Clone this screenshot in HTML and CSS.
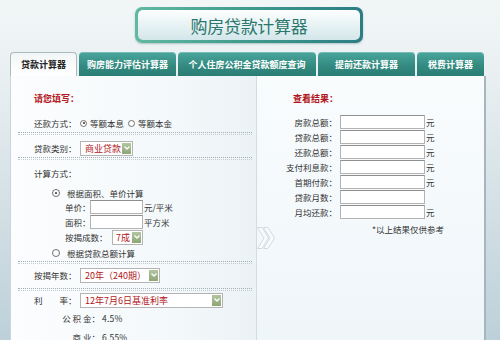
FILE: index.html
```html
<!DOCTYPE html>
<html lang="zh-CN">
<head>
<meta charset="utf-8">
<title>购房贷款计算器</title>
<link rel="stylesheet" href="styles.css">
</head>
<body>
<div class="page">
  <header class="header">
    <div class="title"><div class="title-inner">购房贷款计算器</div></div>
  </header>
  <nav class="tabs">
    <div class="tab active w1">贷款计算器</div>
    <div class="tab w2">购房能力评估计算器</div>
    <div class="tab w3">个人住房公积金贷款额度查询</div>
    <div class="tab w4">提前还款计算器</div>
    <div class="tab w5">税费计算器</div>
  </nav>
  <main class="panel">
    <section class="left">
      <div class="heading">请您填写：</div>
      <div class="row h16 mt9">
        <span class="label">还款方式：</span>
        <span class="radio checked"></span><span class="opt">等额本息</span>
        <span class="radio r2"></span><span class="opt">等额本金</span>
      </div>
      <div class="sep mt1"></div>
      <div class="row h16 mt5">
        <span class="label">贷款类别：</span>
        <div class="select s-type"><span class="sel-text">商业贷款</span><span class="sel-btn"><svg width="6" height="4" viewBox="0 0 6 4"><path d="M0.5 0.5 L3 3 L5.5 0.5" fill="none" stroke="#fff" stroke-width="1.3"/></svg></span></div>
      </div>
      <div class="sep mt1"></div>
      <div class="row h16 mt5"><span class="label">计算方式：</span></div>
      <div class="row h14 mt5 ind1">
        <span class="radio checked wide"></span><span class="opt">根据面积、单价计算</span>
      </div>
      <div class="row h14 ind2">
        <span class="sublabel">单价：</span><span class="input small"></span><span class="unit">元/平米</span>
      </div>
      <div class="row h14 mt1 ind2">
        <span class="sublabel">面积：</span><span class="input small"></span><span class="unit">平方米</span>
      </div>
      <div class="row h16 ind2">
        <span class="sublabel long">按揭成数：</span>
        <div class="select s-ratio"><span class="sel-text">7成</span><span class="sel-btn"><svg width="6" height="4" viewBox="0 0 6 4"><path d="M0.5 0.5 L3 3 L5.5 0.5" fill="none" stroke="#fff" stroke-width="1.3"/></svg></span></div>
      </div>
      <div class="row h14 mt1 ind1">
        <span class="radio wide"></span><span class="opt">根据贷款总额计算</span>
      </div>
      <div class="sep mt1"></div>
      <div class="row h16 mt3">
        <span class="label">按揭年数：</span>
        <div class="select s-year"><span class="sel-text">20年（240期）</span><span class="sel-btn"><svg width="6" height="4" viewBox="0 0 6 4"><path d="M0.5 0.5 L3 3 L5.5 0.5" fill="none" stroke="#fff" stroke-width="1.3"/></svg></span></div>
      </div>
      <div class="sep mt5"></div>
      <div class="row h16 mt1">
        <span class="label">利　　率：</span>
        <div class="select s-rate"><span class="sel-text">12年7月6日基准利率</span><span class="sel-btn"><svg width="6" height="4" viewBox="0 0 6 4"><path d="M0.5 0.5 L3 3 L5.5 0.5" fill="none" stroke="#fff" stroke-width="1.3"/></svg></span></div>
      </div>
      <div class="row h14 mt3 ind3">
        <span class="ratelabel">公 积 金：</span><span class="rate">4.5%</span>
      </div>
      <div class="row h14 mt5 ind3">
        <span class="ratelabel">商 业：</span><span class="rate">6.55%</span>
      </div>
    </section>
    <section class="right">
      <div class="heading r-head">查看结果：</div>
      <div class="results">
        <div class="res-row"><span class="res-label">房款总额：</span><span class="input res"></span><span class="unit">元</span></div>
        <div class="res-row"><span class="res-label">贷款总额：</span><span class="input res"></span><span class="unit">元</span></div>
        <div class="res-row"><span class="res-label">还款总额：</span><span class="input res"></span><span class="unit">元</span></div>
        <div class="res-row"><span class="res-label">支付利息款：</span><span class="input res"></span><span class="unit">元</span></div>
        <div class="res-row"><span class="res-label">首期付款：</span><span class="input res"></span><span class="unit">元</span></div>
        <div class="res-row"><span class="res-label">贷款月数：</span><span class="input res"></span></div>
        <div class="res-row"><span class="res-label">月均还款：</span><span class="input res"></span><span class="unit">元</span></div>
      </div>
      <div class="note">*以上结果仅供参考</div>
    </section>
    <svg class="chevron" width="19" height="22" viewBox="0 0 19 22">
      <path d="M0.5 0.5 H5 L11.5 11 L5 21.5 H0.5 L7 11 Z" fill="#f7fbfc" stroke="#cfdce2" stroke-width="1"/>
      <path d="M6.5 0.5 H11 L17.5 11 L11 21.5 H6.5 L13 11 Z" fill="#f7fbfc" stroke="#cfdce2" stroke-width="1"/>
    </svg>
  </main>
</div>
</body>
</html>
```

FILE: styles.css
```css
* { box-sizing: border-box; }
html, body { margin: 0; padding: 0; }
body {
  width: 500px;
  height: 340px;
  overflow: hidden;
  font-family: "Noto Sans CJK SC", "Noto Sans", sans-serif;
  font-size: 8.5px;
  color: #333;
  background: linear-gradient(#f2f6f7 0px, #eaf0f2 70px, #bdd0d9 340px);
}
.page { width: 500px; height: 340px; }

.header {
  height: 52px;
  padding-top: 7px;
  display: flex;
  justify-content: center;
}
.title {
  width: 228px;
  height: 36px;
  margin-left: -2px;
  padding: 3px;
  border-radius: 7px;
  background: linear-gradient(90deg, #62b9a2, #3f9a8c 50%, #2c7d84);
  box-shadow: 0 1px 2px rgba(60,110,110,0.35);
}
.title-inner {
  height: 100%;
  border-radius: 5px;
  background: linear-gradient(#fdfefe, #e3f0f2 60%, #d3e6ea);
  display: flex;
  align-items: center;
  justify-content: center;
  font-size: 17px;
  color: #2b776c;
  line-height: 1;
  letter-spacing: -0.3px;
}

.tabs {
  display: flex;
  gap: 2px;
  margin-left: 10px;
  height: 24px;
}
.tab {
  height: 24px;
  border-radius: 4px 4px 0 0;
  background: linear-gradient(#4aa69d, #33897f 60%, #2a7d74);
  color: #fff;
  font-weight: bold;
  font-size: 9px;
  display: flex;
  align-items: center;
  justify-content: center;
  line-height: 1;
  box-shadow: inset 0 1px 0 rgba(255,255,255,0.25);
}
.tab.active {
  background: linear-gradient(#f3f6f6, #ffffff);
  border: 1px solid #a8bcbb;
  border-bottom: none;
  color: #222;
  box-shadow: none;
}
.w1 { width: 67px; }
.w2 { width: 97px; }
.w3 { width: 138px; }
.w4 { width: 97px; }
.w5 { width: 67px; }

.panel {
  position: relative;
  display: flex;
  margin-left: 10px;
  width: 476px;
  height: 264px;
  border-left: 1px solid #c9d5da;
  border-right: 2px solid #a5b6be;
}
.left {
  width: 246px;
  padding: 14px 4px 0 7px;
  background: linear-gradient(90deg, #fcfdfe, #f3f8fa 70%, #ebf2f5);
  border-right: 1px solid #d3dde1;
}
.right {
  flex: 1;
  padding-top: 14px;
  background: linear-gradient(#f9fcfd, #eff6fa);
}

.heading {
  height: 16px;
  margin-left: 16px;
  display: flex;
  align-items: center;
  color: #b3151c;
  font-weight: bold;
  font-size: 9px;
  line-height: 1;
}
.r-head { margin-left: 36px; }

.row {
  display: flex;
  align-items: center;
  margin-left: 16px;
  line-height: 1;
  white-space: nowrap;
}
.h16 { height: 16px; }
.h14 { height: 14px; }
.mt1 { margin-top: 1px; }
.mt3 { margin-top: 3px; }
.mt5 { margin-top: 5px; }
.mt6 { margin-top: 6px; }
.mt9 { margin-top: 9px; }
.ind1 { margin-left: 34px; }
.ind2 { margin-left: 47px; }
.ind3 { margin-left: 39px; }

.label { width: 46px; flex: none; }
.sublabel { width: 25px; flex: none; }
.sublabel.long { width: 47px; }
.ratelabel { width: 45px; flex: none; text-align: right; padding-right: 2px; }
.rate { letter-spacing: 0.2px; }

.radio {
  width: 7px;
  height: 7px;
  border-radius: 50%;
  border: 1px solid #6f6f6f;
  background: #fff;
  margin-right: 3px;
  flex: none;
  position: relative;
}
.radio.checked::after {
  content: "";
  position: absolute;
  left: 1.5px;
  top: 1.5px;
  width: 2px;
  height: 2px;
  border-radius: 50%;
  background: #333;
}
.radio.wide { width: 8px; height: 8px; margin-right: 7px; }
.radio.wide.checked::after { left: 2px; top: 2px; }
.radio.r2 { margin-left: 4px; }

.sep {
  height: 3px;
  border-top: 1px dotted #a3aeb3;
  border-bottom: 1px dotted #c3ccd0;
}

.input {
  display: block;
  height: 14px;
  background: #fff;
  border: 1px solid #b3b3b3;
  border-top-color: #8f8f8f;
  flex: none;
}
.input.small { width: 53px; }
.unit { margin-left: 1px; }

.select {
  display: flex;
  align-items: center;
  height: 15px;
  background: #fff;
  border: 1px solid #b4b4b4;
  color: #b0171c;
  font-size: 9px;
  flex: none;
}
.sel-text { flex: 1; padding-left: 4px; }
.sel-btn {
  width: 9px;
  height: 11px;
  margin-right: 1px;
  background: linear-gradient(#b2c59f, #8ea676);
  display: flex;
  align-items: center;
  justify-content: center;
}
.s-type { width: 53px; }
.s-ratio { width: 31px; }
.s-ratio .sel-text { padding-left: 3px; }
.s-year { width: 80px; }
.s-rate { width: 143px; }

.results { margin-top: 9px; }
.res-row {
  display: flex;
  align-items: center;
  height: 14px;
  margin-bottom: 1px;
  line-height: 1;
  white-space: nowrap;
}
.res-label { width: 80px; text-align: right; flex: none; }
.input.res { width: 85px; margin-left: 3px; }
.note {
  margin-top: 3px;
  margin-left: 115px;
  height: 14px;
  line-height: 14px;
  white-space: nowrap;
}

.chevron {
  position: absolute;
  left: 246px;
  top: 151px;
}
```
